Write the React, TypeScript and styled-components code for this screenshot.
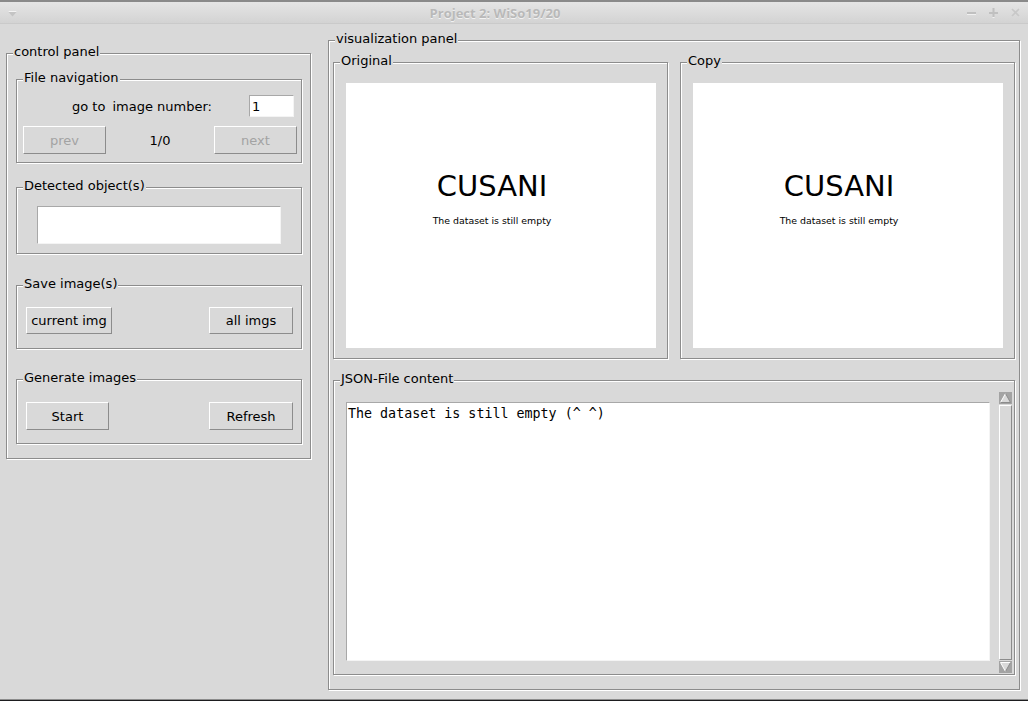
import React from "react";
import styled, { createGlobalStyle } from "styled-components";

const GlobalStyle = createGlobalStyle`
  html, body { margin: 0; padding: 0; width: 1028px; height: 701px; overflow: hidden; background: #d9d9d9; }
  #root { width: 1028px; height: 701px; }
  * { box-sizing: border-box; }
`;

const Window = styled.div`
  width: 1028px;
  height: 701px;
  display: flex;
  flex-direction: column;
  background: #d9d9d9;
  font-family: "DejaVu Sans", "Noto Sans", sans-serif;
  font-size: 13px;
  color: #000;
`;

const TitleBar = styled.div`
  flex: none;
  height: 24px;
  display: flex;
  align-items: center;
  border-top: 2px solid #8a8a8a;
  border-bottom: 1px solid #cacaca;
  background: linear-gradient(#e5e5e5, #d3d3d3);
`;

const MenuIcon = styled.svg`
  margin-left: 8px;
  margin-top: 3px;
  flex: none;
`;

const Title = styled.div`
  flex: 1;
  text-align: center;
  padding-left: 6px;
  font-family: "Open Sans", "Noto Sans", sans-serif;
  font-weight: 700;
  font-size: 13px;
  color: #b9b9b9;
  text-shadow: 0 1px 0 #f2f2f2;
`;

const WinButtons = styled.div`
  flex: none;
  display: flex;
  gap: 13px;
  margin-right: 8px;
  align-items: center;
`;

const Body = styled.div`
  flex: 1;
  display: flex;
  align-items: flex-start;
`;

const BottomEdge = styled.div`
  flex: none;
  height: 2px;
  border-top: 1px solid #8c8c8c;
  background: #1d1d1f;
`;

const Group = styled.div<{ $w: number; $h: number; $mt?: number; $ml?: number }>`
  position: relative;
  flex: none;
  width: ${(p) => p.$w}px;
  height: ${(p) => p.$h}px;
  margin-top: ${(p) => p.$mt ?? 0}px;
  margin-left: ${(p) => p.$ml ?? 0}px;
  border: 1px solid #8c8c8c;
  box-shadow: inset 1px 1px 0 #ffffff, 1px 1px 0 #ffffff;
`;

const Legend = styled.span`
  position: absolute;
  left: 6px;
  top: -10px;
  padding: 0 1px;
  line-height: 16px;
  background: #d9d9d9;
  white-space: nowrap;
`;

const Column = styled.div`
  display: flex;
  flex-direction: column;
`;

const Row = styled.div<{ $mt?: number; $h: number }>`
  display: flex;
  align-items: center;
  height: ${(p) => p.$h}px;
  margin-top: ${(p) => p.$mt ?? 0}px;
`;

const Text = styled.span<{ $ml?: number }>`
  margin-left: ${(p) => p.$ml ?? 0}px;
  white-space: nowrap;
`;

const Counter = styled.span`
  flex: 1;
  text-align: center;
`;

const Entry = styled.div<{ $w: number; $h: number; $ml?: number; $mr?: number }>`
  width: ${(p) => p.$w}px;
  height: ${(p) => p.$h}px;
  margin-left: ${(p) => (p.$ml === undefined ? "auto" : `${p.$ml}px`)};
  margin-right: ${(p) => p.$mr ?? 0}px;
  background: #fff;
  border-top: 1px solid #a8a8a8;
  border-left: 1px solid #a8a8a8;
  border-right: 1px solid #f4f4f4;
  border-bottom: 1px solid #f4f4f4;
  padding-left: 2px;
  display: flex;
  align-items: center;
`;

const Button = styled.div<{ $w: number; $h: number; $ml?: number; $mr?: number; $disabled?: boolean }>`
  flex: none;
  width: ${(p) => p.$w}px;
  height: ${(p) => p.$h}px;
  margin-left: ${(p) => (p.$ml === undefined ? "auto" : `${p.$ml}px`)};
  margin-right: ${(p) => p.$mr ?? 0}px;
  display: flex;
  align-items: center;
  justify-content: center;
  border-top: 1px solid #ffffff;
  border-left: 1px solid #ffffff;
  border-right: 1px solid #8c8c8c;
  border-bottom: 1px solid #8c8c8c;
  color: ${(p) => (p.$disabled ? "#a3a3a3" : "#000")};
  white-space: nowrap;
`;

const PanelRow = styled.div<{ $mt: number }>`
  display: flex;
  margin-top: ${(p) => p.$mt}px;
`;

const Canvas = styled.div`
  width: 310px;
  height: 265px;
  margin: 20px 0 0 12px;
  background: #fff;
  display: flex;
  flex-direction: column;
  align-items: center;
  padding: 86px 18px 0 0;
`;

const Brand = styled.div`
  font-size: 29px;
  line-height: 34px;
`;

const Caption = styled.div`
  font-size: 9.4px;
  line-height: 12px;
  margin-top: 12px;
`;

const JsonBody = styled.div`
  display: flex;
  align-items: flex-start;
`;

const TextArea = styled.div`
  width: 644px;
  height: 259px;
  margin: 21px 0 0 12px;
  background: #fff;
  border-top: 1px solid #a8a8a8;
  border-left: 1px solid #a8a8a8;
  border-right: 1px solid #f4f4f4;
  border-bottom: 1px solid #f4f4f4;
  padding: 3px 1px;
  font-family: "DejaVu Sans Mono", monospace;
  font-size: 13.33px;
  line-height: 16px;
  white-space: pre;
`;

const ScrollBar = styled.div`
  width: 13px;
  height: 281px;
  margin: 11px 2px 0 auto;
  display: flex;
  flex-direction: column;
  background: #d9d9d9;
`;

const Arrow = styled.svg`
  flex: none;
  display: block;
`;

const Slider = styled.div`
  flex: 1;
  border-top: 1px solid #ffffff;
  border-left: 1px solid #ffffff;
  border-right: 1px solid #8c8c8c;
  border-bottom: 1px solid #8c8c8c;
  margin: 1px 0;
`;

function ImagePanel({ label, ml }: { label: string; ml: number }) {
  return (
    <Group $w={335} $h={297} $ml={ml}>
      <Legend>{label}</Legend>
      <Canvas>
        <Brand>CUSANI</Brand>
        <Caption>The dataset is still empty</Caption>
      </Canvas>
    </Group>
  );
}

export default function App() {
  return (
    <>
      <GlobalStyle />
      <Window>
        <TitleBar>
          <MenuIcon width="9" height="6" viewBox="0 0 9 6">
            <path d="M0 0.5 H9 L4.5 5.5 Z" fill="#c4c4c4" />
            <path d="M0.5 0.5 H8.5" stroke="#f4f4f4" strokeWidth="1" />
          </MenuIcon>
          <Title>Project 2: WiSo19/20</Title>
          <WinButtons>
            <svg width="9" height="9" viewBox="0 0 9 9">
              <rect x="0" y="4" width="9" height="2" fill="#c0c0c0" />
              <rect x="0" y="6" width="9" height="1" fill="#f0f0f0" />
            </svg>
            <svg width="9" height="10" viewBox="0 0 9 10">
              <rect x="0" y="4" width="9" height="2" fill="#c0c0c0" />
              <rect x="3.5" y="0" width="2" height="9" fill="#c0c0c0" />
              <rect x="3.5" y="9" width="2" height="1" fill="#f0f0f0" />
            </svg>
            <svg width="9" height="10" viewBox="0 0 9 10">
              <path d="M1 1 L8 8 M8 1 L1 8" stroke="#c8c8c8" strokeWidth="1.6" />
            </svg>
          </WinButtons>
        </TitleBar>
        <Body>
          <Group $w={305} $h={406} $mt={29} $ml={6}>
            <Legend>control panel</Legend>
            <Column>
              <Group $w={286} $h={84} $mt={25} $ml={9}>
                <Legend>File navigation</Legend>
                <Row $h={22} $mt={15}>
                  <Text $ml={55}>go to</Text>
                  <Text $ml={7}>image number:</Text>
                  <Entry $w={45} $h={22} $mr={7}>1</Entry>
                </Row>
                <Row $h={28} $mt={9}>
                  <Button $w={83} $h={28} $ml={6} $disabled>prev</Button>
                  <Counter>1/0</Counter>
                  <Button $w={83} $h={28} $ml={0} $mr={4} $disabled>next</Button>
                </Row>
              </Group>
              <Group $w={286} $h={67} $mt={24} $ml={9}>
                <Legend>Detected object(s)</Legend>
                <Row $h={38} $mt={18}>
                  <Entry $w={244} $h={38} $ml={20} />
                </Row>
              </Group>
              <Group $w={286} $h={64} $mt={31} $ml={9}>
                <Legend>Save image(s)</Legend>
                <Row $h={27} $mt={21}>
                  <Button $w={86} $h={27} $ml={9}>current img</Button>
                  <Button $w={84} $h={27} $mr={8}>all imgs</Button>
                </Row>
              </Group>
              <Group $w={286} $h={65} $mt={30} $ml={9}>
                <Legend>Generate images</Legend>
                <Row $h={28} $mt={22}>
                  <Button $w={83} $h={28} $ml={9}>Start</Button>
                  <Button $w={84} $h={28} $mr={8}>Refresh</Button>
                </Row>
              </Group>
            </Column>
          </Group>
          <Group $w={692} $h={650} $mt={16} $ml={17}>
            <Legend>visualization panel</Legend>
            <Column>
              <PanelRow $mt={21}>
                <ImagePanel label="Original" ml={4} />
                <ImagePanel label="Copy" ml={12} />
              </PanelRow>
              <Group $w={682} $h={295} $mt={21} $ml={4}>
                <Legend>JSON-File content</Legend>
                <JsonBody>
                  <TextArea>The dataset is still empty (^ ^)</TextArea>
                  <ScrollBar>
                    <Arrow width="13" height="12" viewBox="0 0 13 12">
                      <rect x="0" y="0" width="13" height="12" fill="#a3a3a3" />
                      <path d="M6.5 1.5 L11.5 10.5 H1.5 Z" fill="#d9d9d9" />
                      <path d="M6.5 1.5 L1.5 10.5" stroke="#ffffff" strokeWidth="1" />
                      <path d="M6.5 1.5 L11.5 10.5 H1.5" stroke="#8c8c8c" strokeWidth="1" fill="none" />
                    </Arrow>
                    <Slider />
                    <Arrow width="13" height="12" viewBox="0 0 13 12">
                      <rect x="0" y="0" width="13" height="12" fill="#a3a3a3" />
                      <path d="M1.5 1.5 H11.5 L6.5 10.5 Z" fill="#d9d9d9" />
                      <path d="M1.5 1.5 H11.5 M1.5 1.5 L6.5 10.5" stroke="#ffffff" strokeWidth="1" />
                      <path d="M11.5 1.5 L6.5 10.5" stroke="#8c8c8c" strokeWidth="1" />
                    </Arrow>
                  </ScrollBar>
                </JsonBody>
              </Group>
            </Column>
          </Group>
        </Body>
        <BottomEdge />
      </Window>
    </>
  );
}
